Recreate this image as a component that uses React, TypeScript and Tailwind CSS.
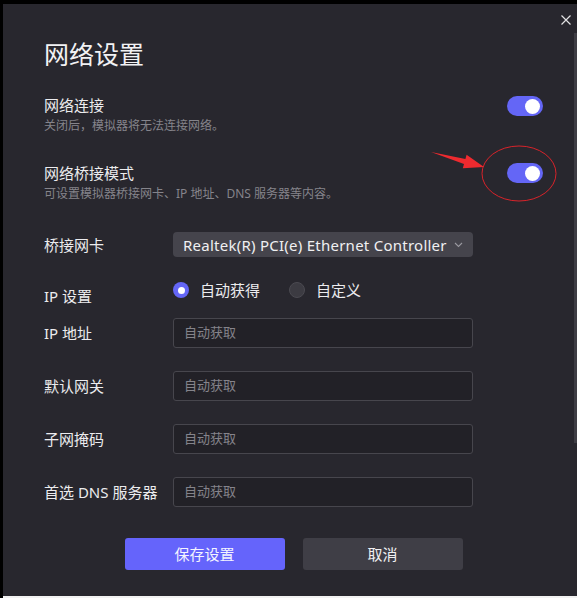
import { FC } from "react";

const font = "font-['Noto_Sans','Noto_Sans_CJK_SC',sans-serif]";

const Toggle: FC = () => (
  <div className="w-[36px] h-[20px] rounded-full bg-[#6466f6] flex items-center justify-end pr-[3px]">
    <div className="w-[15px] h-[15px] rounded-full bg-white" />
  </div>
);

const Field: FC<{ label: string; top: string }> = ({ label, top }) => (
  <div className={`flex items-center ${top}`}>
    <div className="w-[129px] text-[15px] leading-[20px] text-[#ececee]">{label}</div>
    <div className="w-[300px] h-[30px] rounded-[3px] border border-[#47464d] bg-[#222127] flex items-center pl-[10px] text-[13px] text-[#85848b]">
      自动获取
    </div>
  </div>
);

const App: FC = () => {
  return (
    <div className={`w-[577px] h-[598px] bg-black flex flex-col pt-[4px] pl-[3px] ${font}`}>
      <div className="relative flex-1 bg-[#28272e] flex">
        <div className="flex-1 pl-[41px] pr-[31px] pt-[33px]">
          <p className="text-[25px] leading-[34px] text-[#f2f2f4]">网络设置</p>

          {/* 网络连接 */}
          <div className="mt-[24px] flex justify-between items-start">
            <div>
              <p className="text-[15px] leading-[20px] text-[#ececee]">网络连接</p>
              <p className="mt-[3px] text-[12px] leading-[16px] text-[#85848b]">
                关闭后，模拟器将无法连接网络。
              </p>
            </div>
            <div className="mt-[1px]">
              <Toggle />
            </div>
          </div>

          {/* 网络桥接模式 */}
          <div className="mt-[29px] flex justify-between items-start">
            <div>
              <p className="text-[15px] leading-[20px] text-[#ececee]">网络桥接模式</p>
              <p className="mt-[3px] text-[12px] leading-[16px] text-[#85848b]">
                可设置模拟器桥接网卡、IP 地址、DNS 服务器等内容。
              </p>
            </div>
            <div>
              <Toggle />
            </div>
          </div>

          {/* 桥接网卡 */}
          <div className="mt-[30px] flex items-center">
            <div className="w-[129px] text-[15px] leading-[20px] text-[#ececee]">桥接网卡</div>
            <div className="w-[300px] h-[25px] rounded-[4px] bg-[#45444c] flex items-center justify-between pl-[10px] pr-[10px]">
              <span className="text-[15px] leading-[20px] tracking-[0.25px] text-[#f0f0f2] whitespace-nowrap">
                Realtek(R) PCI(e) Ethernet Controller
              </span>
              <svg width="9" height="6" viewBox="0 0 9 6" className="shrink-0">
                <path d="M1 1l3.5 3.5L8 1" fill="none" stroke="#9a99a0" strokeWidth="1.1" />
              </svg>
            </div>
          </div>

          {/* IP 设置 */}
          <div className="mt-[25px] flex items-start h-[24px]">
            <div className="w-[129px] mt-[4px] text-[15px] leading-[20px] text-[#ececee]">IP 设置</div>
            <div className="flex items-center">
              <div className="w-[16px] h-[16px] rounded-full bg-[#6466f6] flex items-center justify-center">
                <div className="w-[7px] h-[7px] rounded-full bg-white" />
              </div>
              <span className="ml-[11px] text-[15px] leading-[16px] text-[#ececee]">自动获得</span>
              <div className="ml-[29px] w-[16px] h-[16px] rounded-full bg-[#3c3b42] border border-[#4b4a51]" />
              <span className="ml-[11px] text-[15px] leading-[16px] text-[#ececee]">自定义</span>
            </div>
          </div>

          <Field label="IP 地址" top="mt-[12px]" />
          <Field label="默认网关" top="mt-[23px]" />
          <Field label="子网掩码" top="mt-[23px]" />
          <Field label="首选 DNS 服务器" top="mt-[23px]" />

          <div className="mt-[31px] flex justify-center gap-[18px]">
            <button className="w-[160px] h-[32px] rounded-[3px] bg-[#6564fb] text-[15px] text-[#f4f4ff]">
              保存设置
            </button>
            <button className="w-[160px] h-[32px] rounded-[3px] bg-[#3f3e46] text-[15px] text-[#f0f0f2]">
              取消
            </button>
          </div>
        </div>

        {/* scrollbar */}
        <div className="w-[3px]">
          <div className="mt-[29px] h-[410px] bg-[#3e3d44]" />
        </div>

        {/* close */}
        <button className="absolute left-[558px] top-[11px] w-[10px] h-[10px]">
          <svg width="10" height="10" viewBox="0 0 10 10">
            <path d="M0.5 0.5L9.5 9.5M9.5 0.5L0.5 9.5" stroke="#e2e2e4" strokeWidth="1.2" />
          </svg>
        </button>

        {/* annotation */}
        <svg
          className="absolute -left-[3px] -top-[4px] pointer-events-none"
          width="577"
          height="598"
          viewBox="0 0 577 598"
        >
          <ellipse cx="519" cy="173.5" rx="37" ry="27.5" fill="none" stroke="#d8232a" strokeWidth="1" />
          <polygon
            points="431,152 465.4,159.1 466.6,154.8 484,167 462.8,168.2 464,163.9"
            fill="#ee2a2f"
          />
        </svg>
      </div>
      <div className="h-[2px] bg-[#f2f2f2]" />
    </div>
  );
};

export default App;
